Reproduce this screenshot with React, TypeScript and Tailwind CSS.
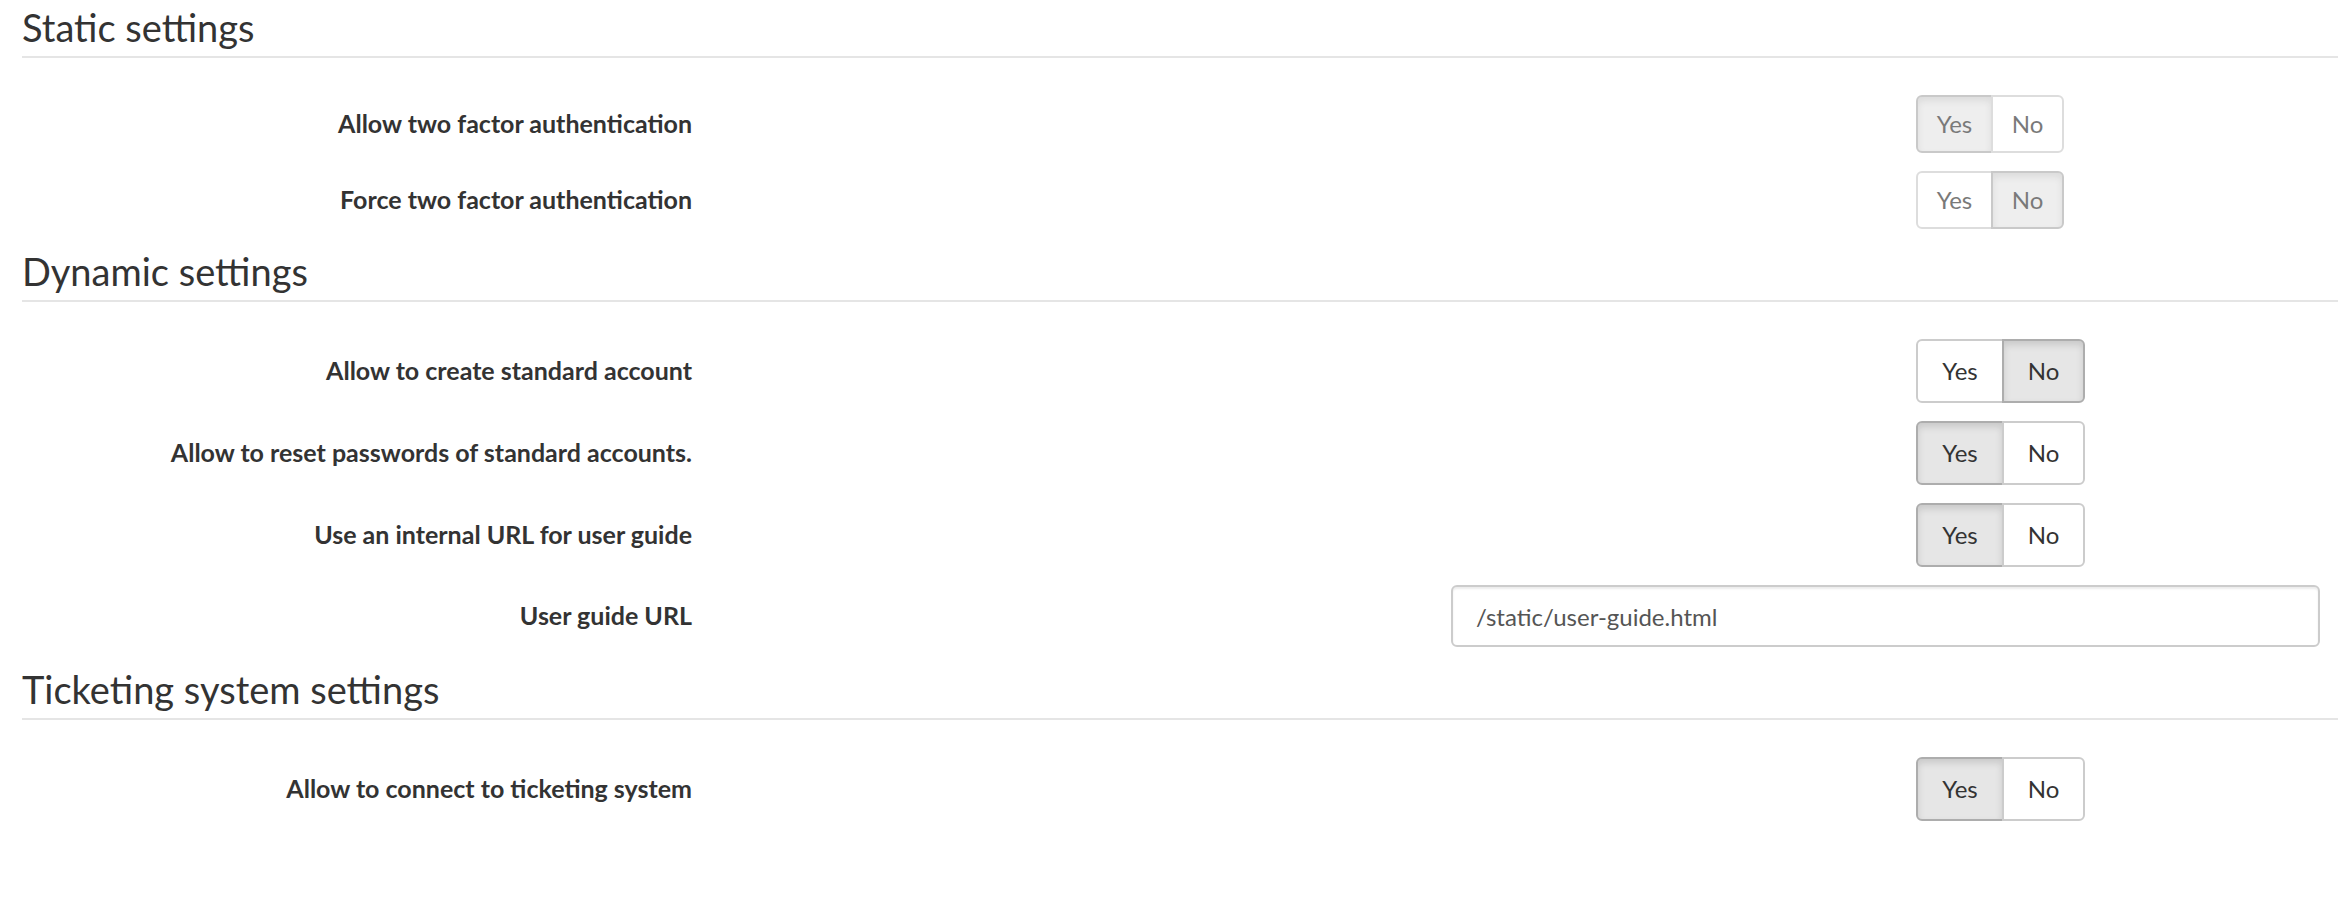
import React, { useState } from "react";

type Row =
  | { kind: "toggle"; label: string; value: boolean; disabled?: boolean }
  | { kind: "input"; label: string; value: string };

const sections: { title: string; rows: Row[] }[] = [
  {
    title: "Static settings",
    rows: [
      { kind: "toggle", label: "Allow two factor authentication", value: true, disabled: true },
      { kind: "toggle", label: "Force two factor authentication", value: false, disabled: true },
    ],
  },
  {
    title: "Dynamic settings",
    rows: [
      { kind: "toggle", label: "Allow to create standard account", value: false },
      { kind: "toggle", label: "Allow to reset passwords of standard accounts.", value: true },
      { kind: "toggle", label: "Use an internal URL for user guide", value: true },
      { kind: "input", label: "User guide URL", value: "/static/user-guide.html" },
    ],
  },
  {
    title: "Ticketing system settings",
    rows: [{ kind: "toggle", label: "Allow to connect to ticketing system", value: true }],
  },
];

const YesNo = ({ initial, disabled }: { initial: boolean; disabled?: boolean }) => {
  const [on, setOn] = useState(initial);
  const btn = (active: boolean) =>
    active
      ? "bg-[#e6e6e6] border-[#adadad] shadow-[inset_0_4px_7px_rgba(0,0,0,0.125)]"
      : "bg-white border-[#ccc]";

  return (
    <div className={`flex ${disabled ? "h-[58px] opacity-65 text-[24px]" : "h-[64px] text-[24px]"}`}>
      <button
        disabled={disabled}
        onClick={() => setOn(true)}
        className={`flex items-center justify-center border-2 text-[#333] ${btn(on)} ${disabled ? "w-[77px]" : "w-[88px]"} rounded-l-[6px]`}
      >
        Yes
      </button>
      <button
        disabled={disabled}
        onClick={() => setOn(false)}
        className={`flex items-center justify-center border-2 text-[#333] ${btn(!on)} ${disabled ? "w-[73px]" : "w-[83px]"} -ml-[2px] rounded-r-[6px]`}
      >
        No
      </button>
    </div>
  );
};

export default function App() {
  return (
    <div className="w-[2338px] bg-white text-[#333] font-['Lato','Liberation_Sans',sans-serif]">
      {sections.map((s) => (
        <div key={s.title} className="mb-[15px]">
          <h2 className="ml-[22px] h-[58px] flex items-end pb-[10px] border-b-2 border-[#e5e5e5] text-[38px] font-normal leading-none text-[#333]">
            {s.title}
          </h2>
          <div className="mt-[37px] flex flex-col gap-[18px]">
            {s.rows.map((r) => (
              <div
                key={r.label}
                className="grid grid-cols-[692px_759px_465px_1fr] items-center"
              >
                <label className="text-right font-bold text-[25px] text-[#333]">
                  {r.label}
                </label>
                {r.kind === "toggle" ? (
                  <div className="col-start-4">
                    <YesNo initial={r.value} disabled={r.disabled} />
                  </div>
                ) : (
                  <div className="col-start-3 col-span-2 mr-[18px]">
                    <input
                      defaultValue={r.value}
                      className="w-full h-[62px] px-[23px] text-[24px] text-[#555] border-2 border-[#ccc] rounded-[6px] shadow-[inset_0_2px_2px_rgba(0,0,0,0.075)] outline-none"
                    />
                  </div>
                )}
              </div>
            ))}
          </div>
        </div>
      ))}
    </div>
  );
}
